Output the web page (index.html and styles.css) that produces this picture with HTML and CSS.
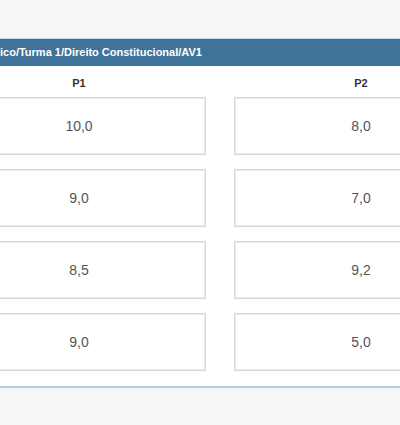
FILE: index.html
```html
<!DOCTYPE html>
<html lang="pt-BR">
<head>
    <meta charset="UTF-8">
    <meta name="viewport" content="width=device-width, initial-scale=1.0">
    <title>Notas - Direito Constitucional</title>
    <link rel="stylesheet" href="styles.css">
</head>
<body>

    <!-- Painel de notas -->
    <div class="panel">
        <div class="panel-heading">ico/Turma 1/Direito Constitucional/AV1</div>
        <div class="panel-body">
            <div class="grades">
                <div class="col">
                    <div class="col-title">P1</div>
                    <div class="grade">10,0</div>
                    <div class="grade">9,0</div>
                    <div class="grade">8,5</div>
                    <div class="grade">9,0</div>
                </div>
                <div class="col">
                    <div class="col-title">P2</div>
                    <div class="grade">8,0</div>
                    <div class="grade">7,0</div>
                    <div class="grade">9,2</div>
                    <div class="grade">5,0</div>
                </div>
            </div>
        </div>
    </div>

</body>
</html>
```
FILE: styles.css
```css
* {
    box-sizing: border-box;
}

body {
    margin: 0;
    padding-top: 38px;
    background-color: #f6f6f6;
    font-family: 'Liberation Sans', Arial, sans-serif;
    overflow: hidden;
}

.panel {
    background-color: #fff;
    border-top: 1px solid #c9d9ec;
    border-bottom: 2px solid #b4c9e6;
    overflow: hidden;
}

.panel-heading {
    background-color: #3f7399;
    color: #fff;
    font-size: 11px;
    font-weight: bold;
    height: 27px;
    line-height: 26px;
    white-space: nowrap;
}

.panel-body {
    padding: 9px 0 15px;
}

.grades {
    display: grid;
    grid-template-columns: 254px 254px;
    column-gap: 28px;
    margin-left: -48px;
}

.col {
    display: flex;
    flex-direction: column;
    gap: 14px;
}

.col-title {
    text-align: center;
    font-size: 11px;
    font-weight: bold;
    color: #333;
    height: 17px;
    line-height: 17px;
    margin-bottom: -9px;
}

.grade {
    height: 58px;
    border: 1px solid #d6d6d6;
    box-shadow: inset 0 0 0 1px #ececec;
    display: flex;
    align-items: center;
    justify-content: center;
    font-size: 14px;
    color: #555;
}
```
